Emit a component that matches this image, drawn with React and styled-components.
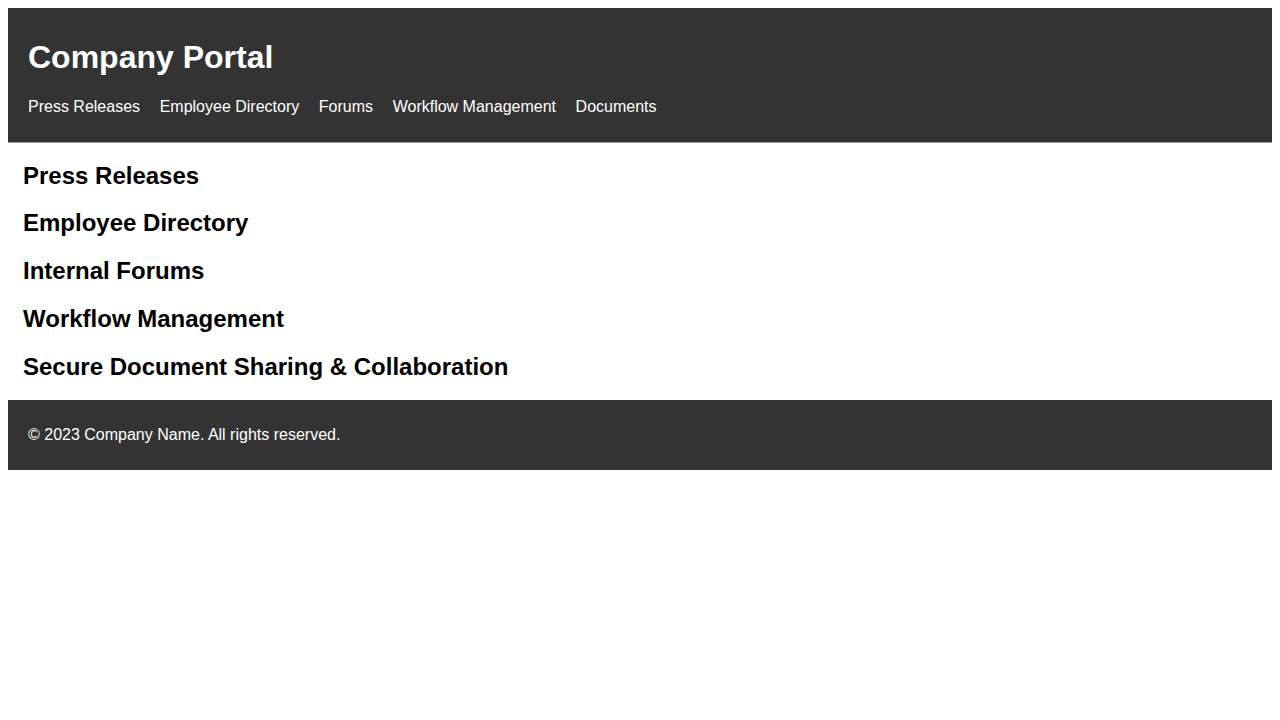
import React from 'react';
import styled, { createGlobalStyle } from 'styled-components';

const GlobalStyles = createGlobalStyle`
  body {
    margin: 8px;
    font-family: "Liberation Sans", Arial, sans-serif;
    background: #fff;
    color: #000;
  }
`;

const Header = styled.header`
  background: #333;
  color: #fff;
  padding: 10px 20px;
  box-shadow: 0 1px 0 #9a9a9a;
`;

const Title = styled.h1`
  font-size: 32px;
  margin: 21.44px 0;
`;

const NavList = styled.ul`
  list-style: none;
  margin: 16px 0;
  padding: 0;
  display: flex;
  gap: 19.6px;
`;

const NavLink = styled.a`
  color: #fff;
  text-decoration: none;
  font-size: 16px;
`;

const Main = styled.main`
  padding: 0 15px;
`;

const Section = styled.section``;

const SectionTitle = styled.h2`
  font-size: 24px;
  margin: 19.75px 0;
`;

const Footer = styled.footer`
  background: #333;
  color: #fff;
  padding: 10px 20px;
  box-shadow: 0 1px 0 #9a9a9a;

  p {
    margin: 16px 0;
    font-size: 16px;
  }
`;

const links = [
  ['press', 'Press Releases'],
  ['directory', 'Employee Directory'],
  ['forums', 'Forums'],
  ['workflow', 'Workflow Management'],
  ['documents', 'Documents'],
];

const sections = [
  ['press', 'Press Releases'],
  ['directory', 'Employee Directory'],
  ['forums', 'Internal Forums'],
  ['workflow', 'Workflow Management'],
  ['documents', 'Secure Document Sharing & Collaboration'],
];

export default function App() {
  return (
    <>
      <GlobalStyles />
      <Header>
        <Title>Company Portal</Title>
        <nav>
          <NavList>
            {links.map(([id, label]) => (
              <li key={id}>
                <NavLink href={`#${id}`}>{label}</NavLink>
              </li>
            ))}
          </NavList>
        </nav>
      </Header>
      <Main>
        {sections.map(([id, label]) => (
          <Section id={id} key={id}>
            <SectionTitle>{label}</SectionTitle>
          </Section>
        ))}
      </Main>
      <Footer>
        <p>&copy; 2023 Company Name. All rights reserved.</p>
      </Footer>
    </>
  );
}
